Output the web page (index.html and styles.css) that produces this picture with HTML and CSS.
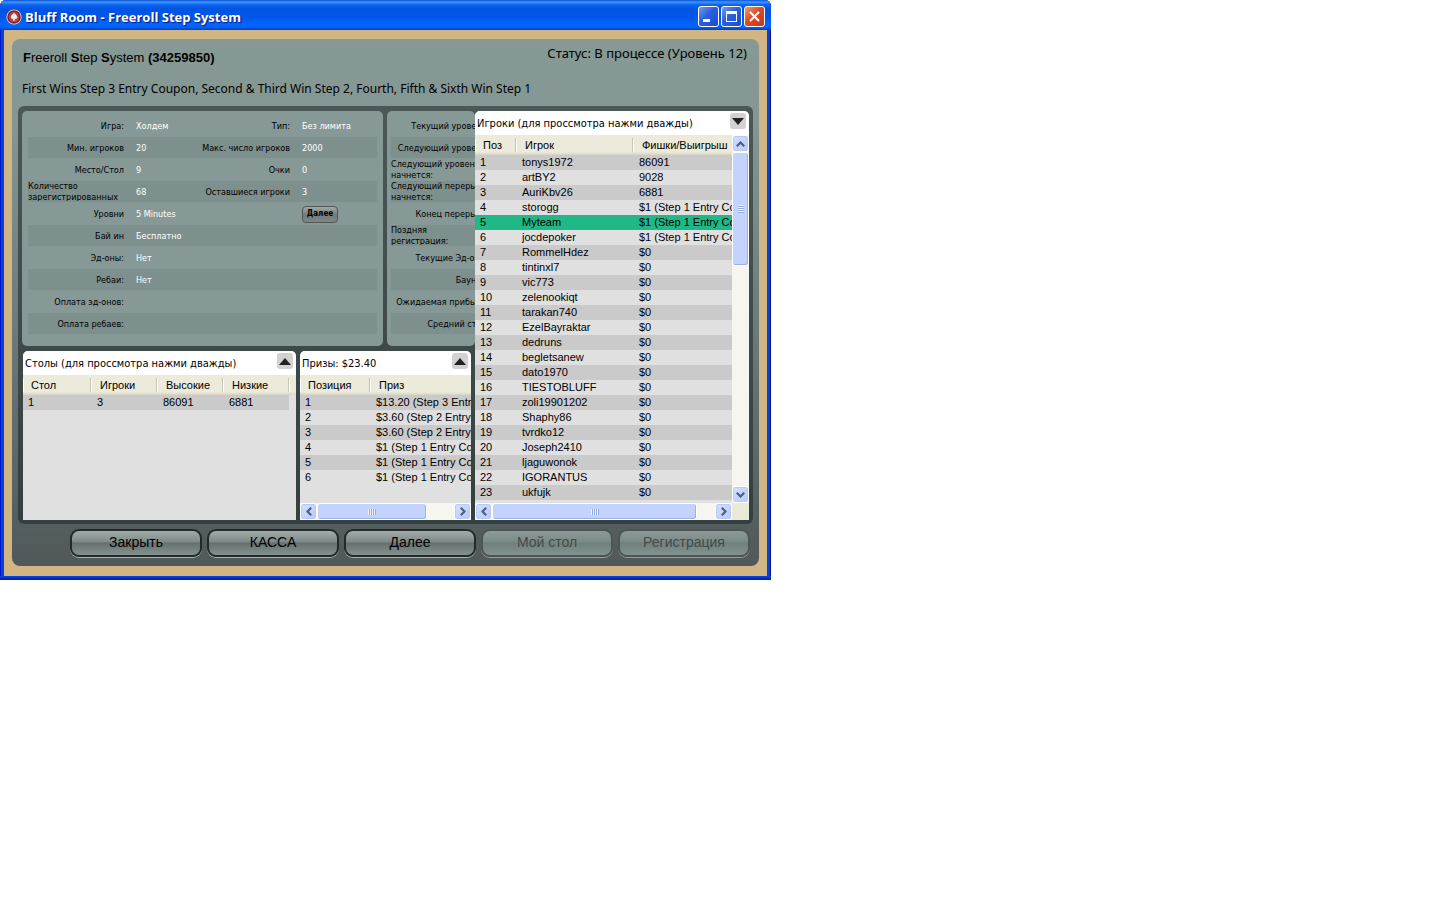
FILE: index.html
```html
<!DOCTYPE html>
<html lang="ru">
<head>
<meta charset="utf-8">
<title>Bluff Room - Freeroll Step System</title>
<link rel="stylesheet" href="styles.css">
</head>
<body>
<svg class="defs" aria-hidden="true">
  <symbol id="up" viewBox="0 0 9 6"><path d="M0.8 5.2 4.5 1.5 8.2 5.2" fill="none" stroke="#4d6185" stroke-width="2.2"/></symbol>
  <symbol id="down" viewBox="0 0 9 6"><path d="M0.8 0.8 4.5 4.5 8.2 0.8" fill="none" stroke="#4d6185" stroke-width="2.2"/></symbol>
  <symbol id="left" viewBox="0 0 6 9"><path d="M5.2 0.8 1.5 4.5 5.2 8.2" fill="none" stroke="#4d6185" stroke-width="2.2"/></symbol>
  <symbol id="right" viewBox="0 0 6 9"><path d="M0.8 0.8 4.5 4.5 0.8 8.2" fill="none" stroke="#4d6185" stroke-width="2.2"/></symbol>
</svg>
<main class="window">
  <header class="titlebar">
    <svg class="logo" width="16" height="16" viewBox="0 0 16 16"><circle cx="8" cy="8" r="7.6" fill="#f4dede"/><circle cx="8" cy="8" r="6.8" fill="#8c1d20"/><circle cx="8" cy="8" r="5.2" fill="#b4444a"/><path d="M8 3.8C7 5.2 4.8 6.4 4.8 8.3c0 1.5 1.6 1.9 2.6 1.1L6.8 11.4h2.4l-.6-2c1 .8 2.6.4 2.600-1.100C11.200 6.400 9 5.200 8 3.800z" fill="#f3eeee"/></svg>
    <h1 class="caption">Bluff Room - Freeroll Step System</h1>
    <button class="sys" aria-label="Свернуть"><svg width="19" height="19" viewBox="0 0 19 19"><path d="M4 12h7v3H4z" fill="#fff"/></svg></button>
    <button class="sys" aria-label="Развернуть"><svg width="19" height="19" viewBox="0 0 19 19"><path d="M4 4h11v11H4zM5 7v7h9V7z" fill="#fff" fill-rule="evenodd"/></svg></button>
    <button class="sys sys-close" aria-label="Закрыть окно"><svg width="19" height="19" viewBox="0 0 19 19"><path d="M5 5 14 14M14 5 5 14" stroke="#fff" stroke-width="2.2"/></svg></button>
  </header>
  <div class="frame">
    <div class="panel">
      <div class="heading">
        <h2 class="name"><b>F</b>reeroll <b>S</b>tep <b>S</b>ystem <b>(34259850)</b></h2>
        <p class="status">Статус: В процессе (Уровень 12)</p>
      </div>
      <p class="about">First Wins Step 3 Entry Coupon, Second &amp; Third Win Step 2, Fourth, Fifth &amp; Sixth Win Step 1</p>

      <div class="well">
        <div class="left">
          <div class="infos">
            <section class="info info-main">
              <div class="row"><span class="key">Игра:</span><span class="val">Холдем</span><span class="key">Тип:</span><span class="val">Без лимита</span></div>
              <div class="row"><span class="key">Мин. игроков</span><span class="val">20</span><span class="key">Макс. число игроков</span><span class="val">2000</span></div>
              <div class="row"><span class="key">Место/Стол</span><span class="val">9</span><span class="key">Очки</span><span class="val">0</span></div>
              <div class="row"><span class="key key-long">Количество зарегистрированных</span><span class="val">68</span><span class="key">Оставшиеся игроки</span><span class="val">3</span></div>
              <div class="row"><span class="key">Уровни</span><span class="val">5 Minutes</span><span class="key"></span><button class="more">Далее</button></div>
              <div class="row"><span class="key">Бай ин</span><span class="val">Бесплатно</span></div>
              <div class="row"><span class="key">Эд-оны:</span><span class="val">Нет</span></div>
              <div class="row"><span class="key">Ребаи:</span><span class="val">Нет</span></div>
              <div class="row"><span class="key">Оплата эд-онов:</span></div>
              <div class="row"><span class="key">Оплата ребаев:</span></div>
            </section>
            <section class="info info-side">
              <div class="row"><span class="key">Текущий уровень:</span></div>
              <div class="row"><span class="key">Следующий уровень:</span></div>
              <div class="row"><span class="key key-long">Следующий уровень<br>начнется:</span></div>
              <div class="row"><span class="key key-long">Следующий перерыв<br>начнется:</span></div>
              <div class="row"><span class="key">Конец перерыва:</span></div>
              <div class="row"><span class="key key-long">Поздняя<br>регистрация:</span></div>
              <div class="row"><span class="key">Текущие Эд-оны:</span></div>
              <div class="row"><span class="key">Баунти:</span></div>
              <div class="row"><span class="key">Ожидаемая прибыль:</span></div>
              <div class="row"><span class="key">Средний стек:</span></div>
            </section>
          </div>
          <div class="lists">
            <section class="list list-tables">
              <div class="list-title"><h3>Столы (для проссмотра нажми дважды)</h3><button class="fold" aria-label="Развернуть столы"><svg width="12" height="7" viewBox="0 0 12 7"><path d="M6 0 12 7H0z" fill="#222"/></svg></button></div>
              <div class="list-body">
                <table>
                  <colgroup><col class="w68"><col class="w66"><col class="w66"><col class="w66"><col></colgroup>
                  <thead><tr><th>Стол</th><th>Игроки</th><th>Высокие</th><th>Низкие</th><th></th></tr></thead>
                  <tbody><tr><td>1</td><td>3</td><td>86091</td><td>6881</td><td class="blank"></td></tr></tbody>
                </table>
              </div>
            </section>
            <section class="list list-prizes">
              <div class="list-title"><h3>Призы: $23.40</h3><button class="fold" aria-label="Развернуть призы"><svg width="12" height="7" viewBox="0 0 12 7"><path d="M6 0 12 7H0z" fill="#222"/></svg></button></div>
              <div class="list-body">
                <table>
                  <colgroup><col class="w70"><col></colgroup>
                  <thead><tr><th>Позиция</th><th>Приз</th></tr></thead>
                  <tbody>
                    <tr><td>1</td><td>$13.20 (Step 3 Entry Coupon)</td></tr>
                    <tr><td>2</td><td>$3.60 (Step 2 Entry Coupon)</td></tr>
                    <tr><td>3</td><td>$3.60 (Step 2 Entry Coupon)</td></tr>
                    <tr><td>4</td><td>$1 (Step 1 Entry Coupon)</td></tr>
                    <tr><td>5</td><td>$1 (Step 1 Entry Coupon)</td></tr>
                    <tr><td>6</td><td>$1 (Step 1 Entry Coupon)</td></tr>
                  </tbody>
                </table>
              </div>
              <div class="hbar"><button class="arrow" aria-label="Влево"><svg width="6" height="9"><use href="#left"/></svg></button><div class="track"><div class="thumb thumb-prizes"><i class="grip"></i></div></div><button class="arrow" aria-label="Вправо"><svg width="6" height="9"><use href="#right"/></svg></button></div>
            </section>
          </div>
        </div>

        <section class="list list-players">
          <div class="list-title"><h3>Игроки (для проссмотра нажми дважды)</h3><button class="fold" aria-label="Свернуть игроков"><svg width="12" height="7" viewBox="0 0 12 7"><path d="M0 0h12L6 7z" fill="#222"/></svg></button></div>
          <div class="scroller">
            <div class="list-body">
              <table>
                <colgroup><col class="w41"><col class="w117"><col></colgroup>
                <thead><tr><th>Поз</th><th>Игрок</th><th>Фишки/Выигрыш</th></tr></thead>
                <tbody>
                  <tr><td>1</td><td>tonys1972</td><td>86091</td></tr>
                  <tr><td>2</td><td>artBY2</td><td>9028</td></tr>
                  <tr><td>3</td><td>AuriKbv26</td><td>6881</td></tr>
                  <tr><td>4</td><td>storogg</td><td>$1 (Step 1 Entry Coupon)</td></tr>
                  <tr class="me"><td>5</td><td>Myteam</td><td>$1 (Step 1 Entry Coupon)</td></tr>
                  <tr><td>6</td><td>jocdepoker</td><td>$1 (Step 1 Entry Coupon)</td></tr>
                  <tr><td>7</td><td>RommelHdez</td><td>$0</td></tr>
                  <tr><td>8</td><td>tintinxl7</td><td>$0</td></tr>
                  <tr><td>9</td><td>vic773</td><td>$0</td></tr>
                  <tr><td>10</td><td>zelenookiqt</td><td>$0</td></tr>
                  <tr><td>11</td><td>tarakan740</td><td>$0</td></tr>
                  <tr><td>12</td><td>EzelBayraktar</td><td>$0</td></tr>
                  <tr><td>13</td><td>dedruns</td><td>$0</td></tr>
                  <tr><td>14</td><td>begletsanew</td><td>$0</td></tr>
                  <tr><td>15</td><td>dato1970</td><td>$0</td></tr>
                  <tr><td>16</td><td>TIESTOBLUFF</td><td>$0</td></tr>
                  <tr><td>17</td><td>zoli19901202</td><td>$0</td></tr>
                  <tr><td>18</td><td>Shaphy86</td><td>$0</td></tr>
                  <tr><td>19</td><td>tvrdko12</td><td>$0</td></tr>
                  <tr><td>20</td><td>Joseph2410</td><td>$0</td></tr>
                  <tr><td>21</td><td>ljaguwonok</td><td>$0</td></tr>
                  <tr><td>22</td><td>IGORANTUS</td><td>$0</td></tr>
                  <tr><td>23</td><td>ukfujk</td><td>$0</td></tr>
                </tbody>
              </table>
            </div>
            <div class="vbar"><button class="arrow" aria-label="Вверх"><svg width="9" height="6"><use href="#up"/></svg></button><div class="track"><div class="thumb thumb-v"><i class="grip"></i></div></div><button class="arrow" aria-label="Вниз"><svg width="9" height="6"><use href="#down"/></svg></button></div>
            <div class="hbar"><button class="arrow" aria-label="Влево"><svg width="6" height="9"><use href="#left"/></svg></button><div class="track"><div class="thumb thumb-players"><i class="grip"></i></div></div><button class="arrow" aria-label="Вправо"><svg width="6" height="9"><use href="#right"/></svg></button></div>
            <div class="corner"></div>
          </div>
        </section>
      </div>

      <div class="actions">
        <button class="action">Закрыть</button>
        <button class="action">КАССА</button>
        <button class="action">Далее</button>
        <button class="action" disabled>Мой стол</button>
        <button class="action" disabled>Регистрация</button>
      </div>
    </div>
  </div>
</main>
</body>
</html>
```

FILE: styles.css
```css
* { box-sizing: border-box; }

body {
  margin: 0;
  background: #fff;
  color: #000;
  font-family: "Noto Sans", sans-serif;
  font-size: 11px;
}

h1, h2, h3, p { margin: 0; font-weight: normal; }
button { margin: 0; padding: 0; border: 0; font: inherit; color: inherit; }
svg { display: block; }
.defs { position: absolute; width: 0; height: 0; }

/* Window chrome */
.window {
  width: 100%;
  max-width: 771px;
  background: #0a3fd8;
  border-radius: 6px 6px 0 0;
  box-shadow: inset 1px 0 #0019cf, inset -1px 0 #00138c;
}
.window::after {
  content: "";
  display: block;
  height: 4px;
  background: linear-gradient(#0a45dc, #001ea0);
}
.titlebar {
  display: flex;
  align-items: center;
  gap: 2px;
  height: 30px;
  padding: 3px 6px 0 6px;
  border-radius: 6px 6px 0 0;
  background: linear-gradient(#0a50cf 0, #3d95ff 2px, #0a62ee 5px, #0054e3 9px, #0057e8 18px, #0166ff 24px, #0162f8 27px, #0040c0 30px);
}
.caption {
  flex: 1;
  margin-left: 1px;
  font: bold 13px/18px "Open Sans", sans-serif;
  color: #fff;
  text-shadow: 1px 1px 1px #0a1883;
}
.sys {
  width: 21px;
  height: 21px;
  border: 1px solid #fff;
  border-radius: 3px;
  background: linear-gradient(135deg, #6f9cf5, #2b5de0 45%, #1a4ad8);
}
.sys-close { background: linear-gradient(135deg, #f09c7e, #dd4c26 45%, #c5361a); }

.frame {
  padding: 9px 8px 10px;
  margin: 0 4px;
  background: #d1b584;
}

/* Tournament panel */
.panel {
  padding: 0 6px 9px;
  border-radius: 8px;
  background: linear-gradient(#869995, #849793 15%, #6c7a79 55%, #505859);
}
.heading { display: flex; justify-content: space-between; padding: 0 6px 0 5px; }
.name { font: 13px/38px "Liberation Sans", sans-serif; }
.status { font-size: 13px; line-height: 28px; }
.about { padding: 3px 4px 8px; font-size: 12px; line-height: 18px; }

.well {
  display: grid;
  grid-template-columns: minmax(0, 1fr) 274px;
  gap: 4px;
  padding: 5px 4px 4px 4px;
  border-radius: 6px;
  background: linear-gradient(#4b5858, #343f3f);
}
.left { display: flex; flex-direction: column; gap: 5px; min-width: 0; }
.infos { display: flex; gap: 4px; margin-right: -4px; }
.info {
  padding: 4px 6px 11px;
  border-radius: 5px;
  background: #869996;
  font: 9px/22px "DejaVu Sans Condensed", sans-serif;
}
.info-main { flex: none; width: 361px; }
.info-side { flex: 1; min-width: 0; padding: 4px 0 11px 4px; overflow: hidden; }
.row {
  display: grid;
  grid-template-columns: 96px 70px 96px 1fr;
  height: 22px;
  align-items: center;
  white-space: nowrap;
  overflow: hidden;
  background-size: 100% 21px;
  background-repeat: no-repeat;
}
.info-side .row { grid-template-columns: 98px; }
.row:nth-child(even) { background-image: linear-gradient(#7d908d, #7d908d); }
.key { display: flex; justify-content: flex-end; }
.key-long {
  display: block;
  height: 20px;
  line-height: 11px;
  overflow: hidden;
  align-self: start;
  white-space: normal;
}
.info-side .key-long { white-space: nowrap; }
.val { padding-left: 12px; color: #fff; }
.more {
  justify-self: start;
  width: 36px;
  height: 17px;
  margin-left: 12px;
  border: 1px solid #4f5856;
  border-radius: 4px;
  background: linear-gradient(#a0aaa8, #737c7a 50%, #7e8785);
  font: bold 8px/14px "DejaVu Sans Condensed", sans-serif;
}

/* Lists */
.lists { flex: 1; display: flex; gap: 4px; padding-left: 1px; }
.list {
  display: flex;
  flex-direction: column;
  min-width: 0;
  border-radius: 5px 5px 0 0;
  background: #e0e0e0;
  overflow: hidden;
}
.list-tables { flex: none; width: 273px; }
.list-prizes { flex: 1; }
.list-title {
  display: flex;
  justify-content: space-between;
  height: 24px;
  padding: 2px 3px 0 2px;
  background: #fff;
}
.list-title h3 { font: 11px/22px "DejaVu Sans Condensed", sans-serif; white-space: nowrap; }
.fold {
  display: grid;
  place-items: center;
  width: 16px;
  height: 16px;
  border-radius: 3px;
  background: #d2d2d2;
}
.list-body { flex: 1; min-width: 0; overflow: hidden; font: 11px/15px "Liberation Sans", sans-serif; }
table { width: 100%; table-layout: fixed; border-collapse: collapse; }
.w41 { width: 41px; }
.w66 { width: 66px; }
.w68 { width: 68px; }
.w70 { width: 70px; }
.w117 { width: 117px; }
th {
  height: 20px;
  padding: 0 0 0 9px;
  font-weight: normal;
  text-align: left;
  white-space: nowrap;
  background: linear-gradient(to right, #fff, #fff) left 4px / 1px 13px no-repeat,
    linear-gradient(to right, #c7c5b2, #c7c5b2) right 3px / 1px 14px no-repeat,
    linear-gradient(#ebeadb 0 17px, #d8d4c4 20px);
}
th:last-child { background: linear-gradient(to right, #fff, #fff) left 4px / 1px 13px no-repeat, linear-gradient(#ebeadb 0 17px, #d8d4c4 20px); }
th:first-child { padding-left: 8px; }
td { height: 15px; padding: 0 0 0 6px; white-space: nowrap; overflow: hidden; }
td:first-child { padding-left: 5px; }
tbody tr:nth-child(odd) { background: #cacaca; }
tbody tr.me { background: #20b886; }
.blank { background: #e0e0e0; }

/* Scroll bars */
.scroller {
  flex: 1;
  display: grid;
  grid-template-columns: minmax(0, 1fr) 17px;
  grid-template-rows: minmax(368px, 1fr) 17px;
}
.hbar, .vbar { display: flex; background: #f6f5ef; }
.hbar { height: 17px; }
.vbar { flex-direction: column; }
.corner { background: #ebe9d8; }
.track { flex: 1; display: flex; }
.vbar .track { flex-direction: column; }
.arrow, .thumb {
  display: grid;
  place-items: center;
  border: 1px solid #fff;
  border-radius: 3px;
  background: linear-gradient(135deg, #d4e0ff, #b6c9f8);
  box-shadow: inset 0 0 0 1px #b8caf5;
}
.arrow { flex: none; width: 17px; height: 17px; }
.thumb { background: #c3d3fd; box-shadow: inset -1px -1px #9ab2e6; }
.hbar .thumb { height: 17px; }
.thumb-prizes { width: 80%; }
.thumb-players { width: 92%; }
.thumb-v { height: 34%; }
.grip { width: 8px; height: 6px; background: repeating-linear-gradient(to right, #eef3ff 0 1px, #93abe0 1px 2px); }
.thumb-v .grip { width: 6px; height: 8px; background: repeating-linear-gradient(#eef3ff 0 1px, #93abe0 1px 2px); }

/* Actions */
.actions { display: flex; justify-content: flex-end; gap: 5px; padding: 5px 3px 0 50px; }
.action {
  flex: 0 1 132px;
  height: 28px;
  padding-bottom: 3px;
  border: 2px solid #232b2a;
  border-radius: 9px;
  background: linear-gradient(#a3adaa, #7e8a88 45%, #65706e 50%, #84928f);
  box-shadow: 0 1px #a9b3b1;
  font: 14px/18px "Liberation Sans", sans-serif;
}
.action:disabled {
  border-color: #4a5554;
  background: linear-gradient(#8c9b98, #7b8a87 45%, #70807d 50%, #82938f);
  box-shadow: 0 1px #93a09d;
  color: #414b4a;
}
```
